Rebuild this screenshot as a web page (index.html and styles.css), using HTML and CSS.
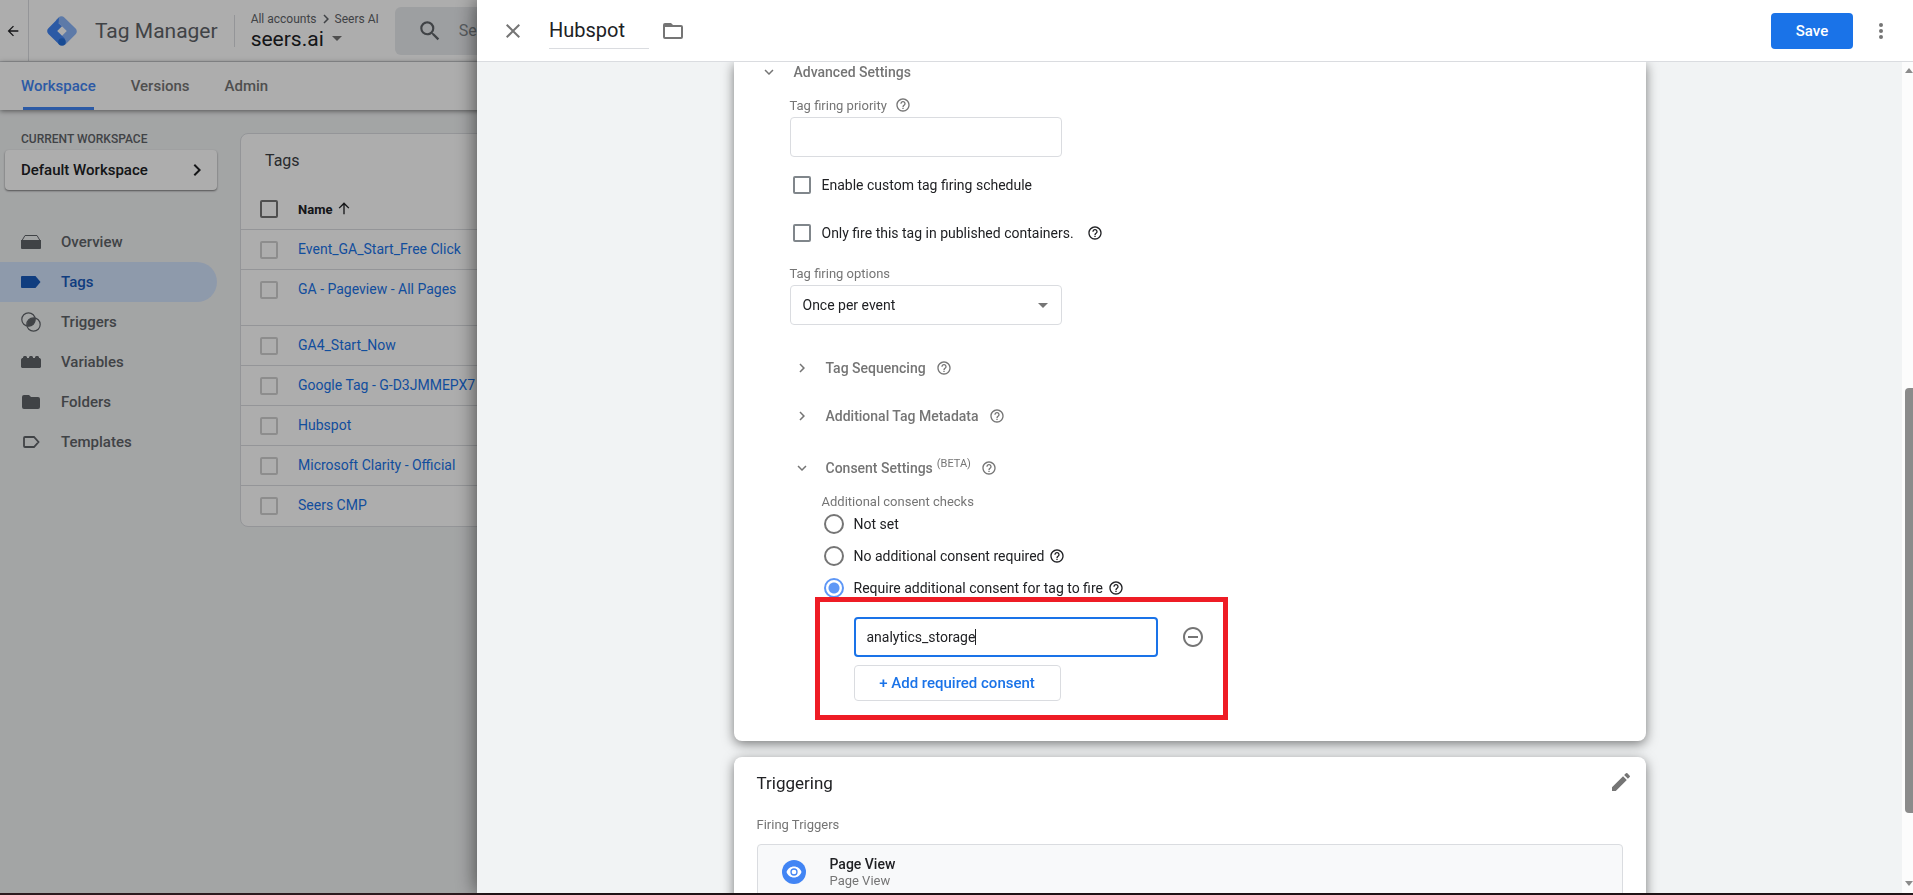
FILE: index.html
```html
<!DOCTYPE html>
<html lang="en">
<head>
    <meta charset="UTF-8">
    <meta name="viewport" content="width=device-width, initial-scale=1.0">
    <title>Tag Manager - Hubspot</title>
    <link rel="stylesheet" href="styles.css">
</head>
<body>

    <svg class="sprite" aria-hidden="true">
        <symbol id="help" viewBox="0 0 24 24"><path d="M11 18h2v-2h-2v2zm1-16C6.48 2 2 6.48 2 12s4.48 10 10 10 10-4.48 10-10S17.52 2 12 2zm0 18c-4.41 0-8-3.59-8-8s3.59-8 8-8 8 3.59 8 8-3.59 8-8 8zm0-14c-2.21 0-4 1.79-4 4h2c0-1.1.9-2 2-2s2 .9 2 2c0 2-3 1.75-3 5h2c0-2.25 3-2.5 3-5 0-2.21-1.79-4-4-4z"/></symbol>
        <symbol id="chevron-right" viewBox="0 0 24 24"><path d="M10 6 8.59 7.41 13.17 12l-4.58 4.59L10 18l6-6z"/></symbol>
        <symbol id="chevron-down" viewBox="0 0 24 24"><path d="M16.59 8.59 12 13.17 7.41 8.59 6 10l6 6 6-6z"/></symbol>
    </svg>

    <div class="app">
        <header class="topbar">
            <button class="back" aria-label="Back">
                <svg width="16" height="16" viewBox="0 0 24 24"><path d="M20 11H7.83l5.59-5.59L12 4l-8 8 8 8 1.41-1.41L7.83 13H20z"/></svg>
            </button>
            <svg class="logo" width="30" height="30" viewBox="0 0 30 30">
                <path fill="#8ab4f8" d="M11.6 1.4a4 4 0 0 1 5.7 0l11.3 11.2a4 4 0 0 1 0 5.7L18.4 28.5l-6-6L19.8 15 8.8 4.2z"/>
                <path fill="#4285f4" d="M11.6 7.3 15 10.3 10.2 15l7.6 7.5-5.6 6L1.4 18a4 4 0 0 1 0-5.8L12 1.6z"/>
                <circle cx="15" cy="26" r="3.8" fill="#246fdb"/>
            </svg>
            <span class="product">Tag Manager</span>
            <div class="account">
                <div class="crumbs">All accounts <svg width="18" height="18"><use href="#chevron-right"/></svg> Seers AI</div>
                <button class="container-name">seers.ai <i class="caret"></i></button>
            </div>
            <div class="search">
                <svg width="26" height="26" viewBox="0 0 24 24"><path d="M15.5 14h-.79l-.28-.27A6.47 6.47 0 0 0 16 9.5 6.5 6.5 0 1 0 9.5 16c1.61 0 3.09-.59 4.23-1.57l.27.28v.79l5 4.99L20.49 19l-4.99-5zm-6 0C7.01 14 5 11.99 5 9.5S7.01 5 9.5 5 14 7.01 14 9.5 11.99 14 9.5 14z"/></svg>
                <input type="text" aria-label="Search" placeholder="Search">
            </div>
        </header>

        <nav class="tabs">
            <a href="#" class="tab active">Workspace</a>
            <a href="#" class="tab">Versions</a>
            <a href="#" class="tab">Admin</a>
        </nav>

        <div class="workspace">
            <aside class="sidebar">
                <div class="sidebar-title">CURRENT WORKSPACE</div>
                <button class="workspace-btn">Default Workspace <svg width="24" height="24"><use href="#chevron-right"/></svg></button>
                <ul class="menu">
                    <li><a href="#"><svg width="20" height="20" viewBox="0 0 20 20"><path d="M0 8h20v8a1 1 0 0 1-1 1H1a1 1 0 0 1-1-1z"/><path d="M1 8.500 4 3.500h12l3 5" fill="none" stroke="currentColor"/></svg>Overview</a></li>
                    <li><a href="#" class="active"><svg width="20" height="20" viewBox="0 0 20 20"><path d="M1 4h13.500l5 6-5 6H1a1 1 0 0 1-1-1V5a1 1 0 0 1 1-1z"/></svg>Tags</a></li>
                    <li><a href="#"><svg width="20" height="20" viewBox="0 0 20 20"><g fill="none" stroke="currentColor" stroke-width="1.200"><circle cx="7.500" cy="7.500" r="6.700"/><circle cx="12.500" cy="12.500" r="6.700"/></g><path d="M14.100 6.200a6.700 6.700 0 0 1-7.900 7.900 6.700 6.700 0 0 1 7.900-7.900z"/></svg>Triggers</a></li>
                    <li><a href="#"><svg width="20" height="20" viewBox="0 0 20 20"><path d="M0 7.500 1 6h1V5l1-1h2l1 1v1h2V5l1-1h2l1 1v1h2V5l1-1h2l1 1v1h1l1 1.500V15l-1 1H1l-1-1z"/></svg>Variables</a></li>
                    <li><a href="#"><svg width="20" height="20" viewBox="0 0 20 20"><path d="M3 3h5l2 2h7a2 2 0 0 1 2 2v8a2 2 0 0 1-2 2H3a2 2 0 0 1-2-2V5a2 2 0 0 1 2-2z"/></svg>Folders</a></li>
                    <li><a href="#"><svg width="20" height="20" viewBox="0 0 20 20"><path d="M4 5h9l4.500 5-4.500 5H4a1 1 0 0 1-1-1V6a1 1 0 0 1 1-1z" fill="none" stroke="currentColor" stroke-width="1.800"/></svg>Templates</a></li>
                </ul>
            </aside>

            <main class="tag-list">
                <h2>Tags</h2>
                <table>
                    <thead>
                        <tr>
                            <th class="pick"><input type="checkbox" class="check" aria-label="Select all"></th>
                            <th>Name <svg width="16" height="16" viewBox="0 0 24 24"><path d="m4 10 1.410 1.410L11 5.830V20h2V5.830l5.580 5.590L20 10l-8-8z"/></svg></th>
                        </tr>
                    </thead>
                    <tbody>
                        <tr>
                            <td class="pick"><input type="checkbox" class="check" aria-label="Event_GA_Start_Free Click"></td>
                            <td><a href="#">Event_GA_Start_Free Click</a></td>
                        </tr>
                        <tr class="tall">
                            <td class="pick"><input type="checkbox" class="check" aria-label="GA - Pageview - All Pages"></td>
                            <td><a href="#">GA - Pageview - All Pages</a></td>
                        </tr>
                        <tr>
                            <td class="pick"><input type="checkbox" class="check" aria-label="GA4_Start_Now"></td>
                            <td><a href="#">GA4_Start_Now</a></td>
                        </tr>
                        <tr>
                            <td class="pick"><input type="checkbox" class="check" aria-label="Google Tag"></td>
                            <td><a href="#">Google Tag - G-D3JMMEPX7</a></td>
                        </tr>
                        <tr>
                            <td class="pick"><input type="checkbox" class="check" aria-label="Hubspot"></td>
                            <td><a href="#">Hubspot</a></td>
                        </tr>
                        <tr>
                            <td class="pick"><input type="checkbox" class="check" aria-label="Microsoft Clarity - Official"></td>
                            <td><a href="#">Microsoft Clarity - Official</a></td>
                        </tr>
                        <tr>
                            <td class="pick"><input type="checkbox" class="check" aria-label="Seers CMP"></td>
                            <td><a href="#">Seers CMP</a></td>
                        </tr>
                    </tbody>
                </table>
            </main>
        </div>
    </div>

    <div class="scrim"></div>

    <!-- Tag editor drawer -->
    <div class="drawer">
        <header class="drawer-head">
            <button class="icon-btn" aria-label="Close">
                <svg width="24" height="24" viewBox="0 0 24 24"><path d="M19 6.410 17.590 5 12 10.590 6.410 5 5 6.410 10.590 12 5 17.590 6.410 19 12 13.410 17.590 19 19 17.590 13.410 12z"/></svg>
            </button>
            <input type="text" class="tag-name" aria-label="Tag name" value="Hubspot">
            <button class="icon-btn" aria-label="Move to folder">
                <svg width="24" height="24" viewBox="0 0 24 24"><path d="M20 6h-8l-2-2H4a2 2 0 0 0-2 2v12a2 2 0 0 0 2 2h16a2 2 0 0 0 2-2V8a2 2 0 0 0-2-2zm0 12H4V8h16z"/></svg>
            </button>
            <button class="save">Save</button>
            <button class="icon-btn more" aria-label="More actions">
                <svg width="24" height="24" viewBox="0 0 24 24"><circle cx="12" cy="6" r="2"/><circle cx="12" cy="12" r="2"/><circle cx="12" cy="18" r="2"/></svg>
            </button>
        </header>

        <div class="drawer-body">
            <div class="cards">
                <section class="card config">
                    <h3 class="section-title top"><svg class="arrow"><use href="#chevron-down"/></svg>Advanced Settings</h3>

                    <div class="settings">
                        <div class="field-label">
                            <label for="priority">Tag firing priority</label>
                            <svg class="help"><use href="#help"/></svg>
                        </div>
                        <input type="text" id="priority" class="text-input">

                        <div class="option">
                            <input type="checkbox" class="check" id="schedule">
                            <label for="schedule">Enable custom tag firing schedule</label>
                        </div>
                        <div class="option">
                            <input type="checkbox" class="check" id="published">
                            <label for="published">Only fire this tag in published containers.</label>
                            <svg class="help"><use href="#help"/></svg>
                        </div>

                        <div class="field-label">
                            <label for="firing">Tag firing options</label>
                        </div>
                        <div class="select-wrap">
                            <select id="firing" class="text-input">
                                <option>Once per event</option>
                                <option>Once per page</option>
                                <option>Unlimited</option>
                            </select>
                            <i class="caret"></i>
                        </div>

                        <h3 class="section-title"><svg class="arrow"><use href="#chevron-right"/></svg>Tag Sequencing <svg class="help"><use href="#help"/></svg></h3>
                        <h3 class="section-title"><svg class="arrow"><use href="#chevron-right"/></svg>Additional Tag Metadata <svg class="help"><use href="#help"/></svg></h3>
                        <h3 class="section-title consent-title"><svg class="arrow"><use href="#chevron-down"/></svg>Consent Settings <sup>(BETA)</sup> <svg class="help"><use href="#help"/></svg></h3>

                        <fieldset class="consent">
                            <legend>Additional consent checks</legend>
                            <div class="radio-row">
                                <input type="radio" name="consent" id="notset">
                                <label for="notset">Not set</label>
                            </div>
                            <div class="radio-row">
                                <input type="radio" name="consent" id="none">
                                <label for="none">No additional consent required</label>
                                <svg class="help"><use href="#help"/></svg>
                            </div>
                            <div class="radio-row">
                                <input type="radio" name="consent" id="require" checked>
                                <label for="require">Require additional consent for tag to fire</label>
                                <svg class="help"><use href="#help"/></svg>
                            </div>
                            <div class="required">
                                <div class="required-row">
                                    <input type="text" class="text-input" aria-label="Required consent" value="analytics_storage" autofocus>
                                    <i class="text-cursor"></i>
                                    <button class="icon-btn" aria-label="Remove">
                                        <svg width="24" height="24" viewBox="0 0 24 24"><path d="M7 11v2h10v-2H7zm5-9C6.480 2 2 6.480 2 12s4.480 10 10 10 10-4.480 10-10S17.520 2 12 2zm0 18c-4.410 0-8-3.590-8-8s3.590-8 8-8 8 3.590 8 8-3.590 8-8 8z"/></svg>
                                    </button>
                                </div>
                                <button class="add-btn">+ Add required consent</button>
                                <div class="highlight"></div>
                            </div>
                        </fieldset>
                    </div>
                </section>

                <section class="card triggering">
                    <div class="card-head">
                        <h2>Triggering</h2>
                        <button class="icon-btn" aria-label="Edit">
                            <svg width="24" height="24" viewBox="0 0 24 24"><path d="M3 17.250V21h3.750L17.810 9.940l-3.750-3.750zM20.710 7.040a1 1 0 0 0 0-1.410l-2.340-2.340a1 1 0 0 0-1.410 0l-1.830 1.830 3.750 3.750z"/></svg>
                        </button>
                    </div>
                    <div class="firing-label">Firing Triggers</div>
                    <div class="trigger">
                        <svg width="24" height="24" viewBox="0 0 24 24">
                            <circle cx="12" cy="12" r="12" fill="#4285f4"/>
                            <path fill="#fff" d="M12 6.500C8.500 6.500 5.700 8.700 4.500 12c1.200 3.300 4 5.500 7.500 5.500s6.300-2.200 7.500-5.500c-1.200-3.300-4-5.500-7.500-5.500z"/>
                            <circle cx="12" cy="12" r="3" fill="#fff" stroke="#4285f4" stroke-width="1.300"/>
                        </svg>
                        <div>
                            <div class="trigger-name">Page View</div>
                            <div class="trigger-type">Page View</div>
                        </div>
                    </div>
                </section>
            </div>

            <div class="scrollbar">
                <i class="scroll-up"></i>
                <div class="thumb"></div>
                <i class="scroll-down"></i>
            </div>
        </div>
    </div>

</body>
</html>
```

FILE: styles.css
```css
* {
    box-sizing: border-box;
}
body {
    margin: 0;
    height: 100vh;
    overflow: hidden;
    border-bottom: 2px solid #2b1a1e;
    background-color: #f1f3f4;
    color: #202124;
    font-family: Roboto, Arial, sans-serif;
    font-size: 14px;
}
h2, h3, ul, fieldset, legend {
    margin: 0;
    padding: 0;
    border: 0;
    font-weight: 400;
}
a {
    text-decoration: none;
}
button {
    padding: 0;
    border: 0;
    background: none;
    color: inherit;
    font-family: inherit;
    cursor: pointer;
}
input, select {
    font-family: inherit;
    color: inherit;
}
svg {
    fill: currentColor;
    flex: none;
}
.sprite {
    display: none;
}
.caret {
    flex: none;
    border: 5px solid transparent;
    border-top-color: #757575;
    border-bottom: 0;
}
.check {
    appearance: none;
    display: block;
    flex: none;
    width: 18px;
    height: 18px;
    margin: 0;
    border: 2px solid #80868b;
    border-radius: 2px;
}

/* top bar */
.topbar {
    display: flex;
    align-items: center;
    height: 62px;
    background-color: #fff;
    border-bottom: 1px solid #dadce0;
}
.back {
    display: flex;
    align-items: center;
    justify-content: center;
    width: 29px;
    height: 61px;
    padding-right: 2px;
    border-right: 1px solid #dadce0;
}
.logo {
    margin: 0 18px;
}
.product {
    color: #5f6368;
    font-size: 21px;
    white-space: nowrap;
}
.account {
    margin-left: 16px;
    padding-left: 16px;
    border-left: 1px solid #dadce0;
    height: 32px;
    display: flex;
    flex-direction: column;
    justify-content: center;
    white-space: nowrap;
}
.crumbs {
    display: flex;
    align-items: center;
    color: #5f6368;
    font-size: 12px;
    line-height: 16px;
}
.crumbs svg {
    margin: -1px 0;
}
.container-name {
    display: flex;
    align-items: center;
    gap: 8px;
    font-size: 21px;
    line-height: 24px;
}
.search {
    flex: 1;
    display: flex;
    align-items: center;
    gap: 14px;
    height: 48px;
    margin-left: 16px;
    margin-right: 400px;
    padding: 0 22px;
    border-radius: 6px;
    background-color: #e8eaed;
    color: #5f6368;
}
.search input {
    flex: 1;
    border: 0;
    background: none;
    font-size: 16px;
}
.search input::placeholder {
    color: #80868b;
}

/* tabs */
.tabs {
    position: relative;
    display: flex;
    gap: 35px;
    height: 48px;
    padding-left: 21px;
    background-color: #fff;
    box-shadow: 0 1px 5px rgba(0, 0, 0, 0.5);
}
.tab {
    color: #757575;
    font-size: 15px;
    font-weight: 500;
    line-height: 48px;
}
.tab.active {
    color: #4285f4;
    background: linear-gradient(#4285f4, #4285f4) center bottom / 71px 3px no-repeat;
}

/* workspace */
.workspace {
    display: flex;
    gap: 23px;
    padding-top: 23px;
}
.sidebar {
    width: 217px;
}
.sidebar-title {
    padding-left: 21px;
    color: #5f6368;
    font-size: 12px;
    font-weight: 500;
    line-height: 12px;
}
.workspace-btn {
    display: flex;
    align-items: center;
    justify-content: space-between;
    width: 212px;
    height: 40px;
    margin: 5px 0 32px 5px;
    padding: 0 8px 0 16px;
    border-radius: 4px;
    background-color: #fff;
    box-shadow: 0 1px 2px rgba(0, 0, 0, 0.5);
    font-size: 15px;
    font-weight: 500;
}
.menu {
    list-style: none;
}
.menu a {
    display: flex;
    align-items: center;
    gap: 20px;
    height: 40px;
    padding-left: 21px;
    border-radius: 0 20px 20px 0;
    color: #5f6368;
    font-size: 15px;
    font-weight: 500;
}
.menu a.active {
    background-color: #d2e3fc;
    color: #185abc;
}
.tag-list {
    flex: 1;
    padding-bottom: 1px;
    border: 1px solid #dadce0;
    border-radius: 8px;
    background-color: #fff;
}
.tag-list h2 {
    padding: 16px 24px 17px;
    color: #3c4043;
    font-size: 16px;
    line-height: 22px;
}
.tag-list table {
    width: 100%;
    border-collapse: collapse;
}
.tag-list th, .tag-list td {
    height: 40px;
    padding: 11px 0 0;
    text-align: left;
    vertical-align: top;
    white-space: nowrap;
    line-height: 16px;
}
.tag-list tbody tr {
    border-top: 1px solid #dadce0;
}
.tag-list .tall td {
    height: 56px;
}
.tag-list th {
    font-size: 13px;
    font-weight: 700;
    line-height: 20px;
}
.tag-list th svg {
    vertical-align: -3px;
}
.tag-list .pick {
    width: 57px;
    padding-left: 19px;
}
.tag-list thead .check {
    border-color: #757575;
}
.tag-list tbody .check {
    border-color: #d0d0d0;
}
.tag-list td a {
    color: #1a73e8;
}

/* drawer */
.scrim {
    position: fixed;
    inset: 0 0 2px;
    background-color: rgba(0, 0, 0, 0.32);
}
.drawer {
    position: fixed;
    inset: 0 0 2px 477px;
    display: flex;
    flex-direction: column;
    background-color: #f1f3f4;
    box-shadow: 0 0 20px rgba(0, 0, 0, 0.6);
}
.drawer-head {
    display: flex;
    align-items: center;
    height: 62px;
    padding-left: 24px;
    padding-right: 20px;
    background-color: #fff;
    border-bottom: 1px solid #dadce0;
}
.icon-btn {
    display: flex;
    color: #757575;
}
.tag-name {
    width: 100px;
    height: 36px;
    margin: 0 12px 0 24px;
    padding: 0;
    border: 0;
    border-bottom: 1px solid #dadce0;
    outline: none;
    font-size: 20px;
}
.save {
    width: 82px;
    height: 36px;
    margin-left: auto;
    margin-right: 16px;
    border-radius: 4px;
    background-color: #1a73e8;
    color: #fff;
    font-size: 15px;
    font-weight: 500;
}
.drawer-body {
    flex: 1;
    display: flex;
    min-height: 0;
}
.cards {
    flex: 1;
    overflow: hidden;
}
.card {
    max-width: 912px;
    margin: 0 auto 16px;
    border-radius: 8px;
    background-color: #fff;
    box-shadow: 0 3px 12px rgba(0, 0, 0, 0.5);
}
.config {
    border-radius: 0 0 8px 8px;
    padding: 0 56px 40px;
}
.section-title {
    display: flex;
    align-items: center;
    height: 48px;
    color: #757575;
    font-size: 14px;
    font-weight: 500;
}
.section-title.top {
    height: 20px;
    margin-left: -30px;
}
.arrow {
    width: 18px;
    height: 18px;
    margin-right: 15px;
    margin-left: 3px;
}
.top .arrow {
    margin-left: 0;
    margin-right: 16px;
}
.help {
    width: 16px;
    height: 16px;
    margin-left: 8px;
}
.section-title .help {
    margin-left: 10px;
}
.field-label {
    display: flex;
    align-items: center;
    height: 24px;
    color: #757575;
    font-size: 13px;
}
.section-title.top + .settings {
    padding-top: 11px;
}
.text-input {
    display: block;
    width: 272px;
    height: 40px;
    padding: 0 12px;
    border: 1px solid #dadce0;
    border-radius: 4px;
    outline: none;
    background-color: #fff;
    font-size: 14px;
}
.option {
    display: flex;
    align-items: center;
    gap: 11px;
    height: 48px;
    padding-left: 3px;
}
.text-input + .option {
    margin-top: 4px;
}
.option + .field-label {
    margin-top: 4px;
}
.option .help {
    margin-left: 2px;
}
.select-wrap {
    position: relative;
    width: 272px;
    margin-bottom: 19px;
}
.select-wrap select {
    appearance: none;
}
.select-wrap .caret {
    position: absolute;
    top: 18px;
    right: 14px;
    pointer-events: none;
}
.consent-title {
    height: 56px;
}
.section-title sup {
    margin-left: 4px;
    padding-bottom: 8px;
    font-size: 11px;
    font-weight: 400;
    line-height: 12px;
}
.consent {
    margin-left: 32px;
}
.consent legend {
    color: #757575;
    font-size: 13px;
    line-height: 12px;
}
.radio-row {
    display: flex;
    align-items: center;
    height: 32px;
    padding-left: 2px;
}
.radio-row input {
    appearance: none;
    width: 20px;
    height: 20px;
    margin: 0 10px 0 0;
    border: 2px solid #757575;
    border-radius: 50%;
}
.radio-row input:checked {
    border-color: #5e97f6;
    background: radial-gradient(#5e97f6 5px, #fff 6px);
}
.radio-row .help {
    margin-left: 5px;
}
.required {
    position: relative;
    padding: 13px 0 0 32px;
}
.required-row {
    position: relative;
    display: flex;
    align-items: center;
    gap: 23px;
}
.required-row .text-input {
    width: 304px;
    padding: 0 11px;
    border: 2px solid #1a73e8;
    caret-color: transparent;
}
.text-cursor {
    position: absolute;
    top: 12px;
    left: 121px;
    width: 1px;
    height: 16px;
    background-color: #202124;
}
.add-btn {
    width: 207px;
    height: 36px;
    margin-top: 8px;
    border: 1px solid #dadce0;
    border-radius: 4px;
    color: #1a73e8;
    font-size: 15px;
    font-weight: 500;
}
.highlight {
    position: absolute;
    top: -7px;
    left: -7px;
    width: 413px;
    height: 123px;
    border: 5px solid #ee1c25;
    pointer-events: none;
}

/* triggering card */
.triggering {
    padding: 13px 23px 60px;
}
.card-head {
    display: flex;
    align-items: flex-start;
    justify-content: space-between;
    padding-right: 1px;
}
.card-head h2 {
    font-size: 17px;
    line-height: 26px;
}
.card-head .icon-btn {
    margin-right: -11px;
}
.firing-label {
    padding: 21px 0 11px;
    color: #757575;
    font-size: 13px;
    line-height: 16px;
}
.trigger {
    display: flex;
    align-items: center;
    gap: 24px;
    padding: 10px 24px;
    border: 1px solid #dadce0;
    border-radius: 4px;
    background-color: #f8f9fa;
}
.trigger-name {
    font-weight: 500;
    line-height: 18px;
}
.trigger-type {
    color: #757575;
    font-size: 13px;
    line-height: 16px;
}

/* scrollbar */
.scrollbar {
    display: flex;
    flex-direction: column;
    align-items: flex-end;
    justify-content: space-between;
    width: 11px;
    padding: 6px 0 7px;
    background-color: #fcfcfc;
    overflow: hidden;
}
.thumb {
    width: 8px;
    height: 52%;
    margin-top: auto;
    margin-bottom: 68px;
    border-radius: 4px 0 0 4px;
    background-color: #8b8b8b;
}
.scroll-up, .scroll-down {
    border: 4px solid transparent;
    border-top: 0;
    border-bottom: 5px solid #8b8b8b;
}
.scroll-down {
    border-top: 5px solid #8b8b8b;
    border-bottom: 0;
}
```
